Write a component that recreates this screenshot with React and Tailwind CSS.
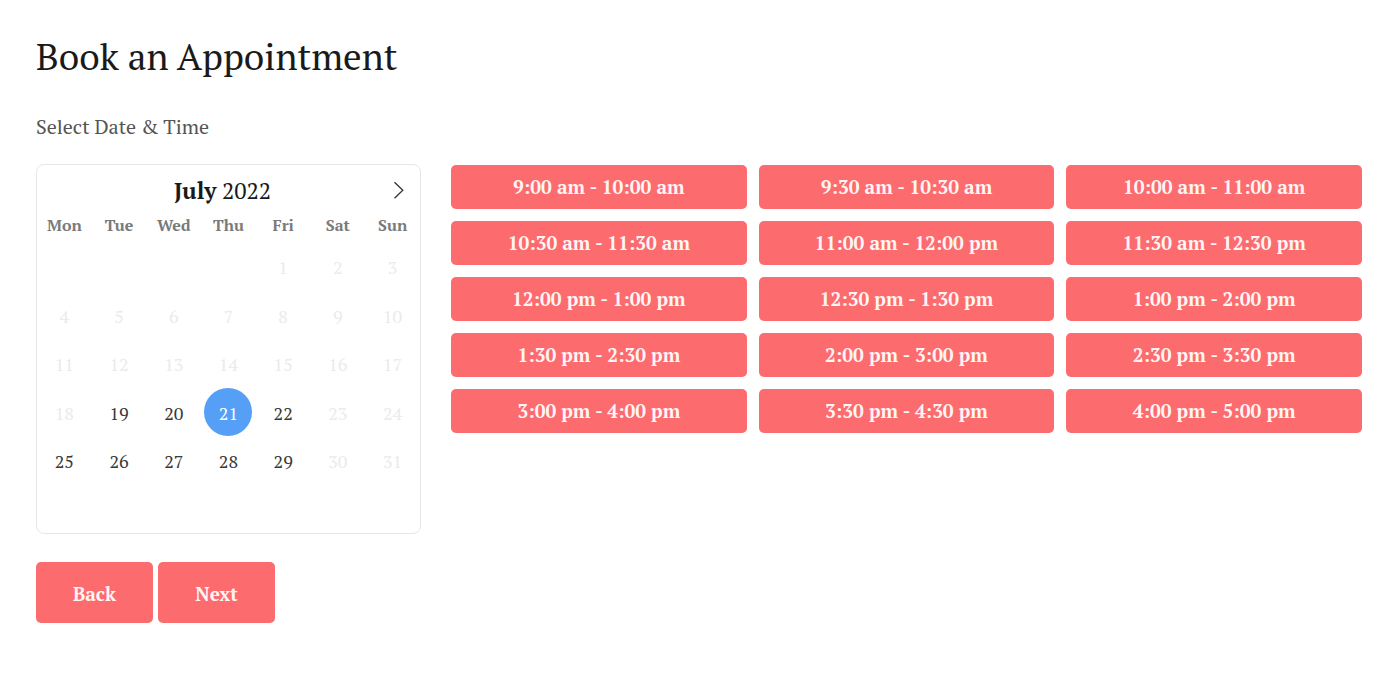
const weekdays = ["Mon", "Tue", "Wed", "Thu", "Fri", "Sat", "Sun"];

const weeks = [
  [null, null, null, null, 1, 2, 3],
  [4, 5, 6, 7, 8, 9, 10],
  [11, 12, 13, 14, 15, 16, 17],
  [18, 19, 20, 21, 22, 23, 24],
  [25, 26, 27, 28, 29, 30, 31],
  [null, null, null, null, null, null, null],
];

const selectedDay = 21;
const availableDays = [19, 20, 21, 22, 25, 26, 27, 28, 29];

const slots = [
  "9:00 am - 10:00 am",
  "9:30 am - 10:30 am",
  "10:00 am - 11:00 am",
  "10:30 am - 11:30 am",
  "11:00 am - 12:00 pm",
  "11:30 am - 12:30 pm",
  "12:00 pm - 1:00 pm",
  "12:30 pm - 1:30 pm",
  "1:00 pm - 2:00 pm",
  "1:30 pm - 2:30 pm",
  "2:00 pm - 3:00 pm",
  "2:30 pm - 3:30 pm",
  "3:00 pm - 4:00 pm",
  "3:30 pm - 4:30 pm",
  "4:00 pm - 5:00 pm",
];

function dayClass(day) {
  if (day === selectedDay) return "bg-[#569ff7] text-white";
  if (availableDays.includes(day)) return "text-[#393939]";
  return "text-[#ebebeb]";
}

function Day({ day }) {
  return (
    <button
      type="button"
      disabled={!availableDays.includes(day)}
      aria-pressed={day === selectedDay}
      className={`mx-auto block size-12 rounded-full pt-0.5 text-[18px] leading-6 ${dayClass(day)}`}
    >
      {day}
    </button>
  );
}

function Calendar() {
  return (
    <section
      aria-label="Calendar"
      className="w-[385px] shrink-0 rounded-lg border border-[#e6e6e6]"
    >
      <div className="grid grid-cols-[44px_1fr_44px] items-center pt-1">
        <h2 className="col-start-2 pr-3 text-center text-[23px] leading-[44px] text-[#1a1a1a]">
          <span className="font-bold">July</span> 2022
        </h2>
        <button
          type="button"
          aria-label="Next month"
          className="flex h-11 items-center justify-center text-[#333]"
        >
          <svg
            className="size-5"
            viewBox="0 0 20 20"
            fill="none"
            stroke="currentColor"
            strokeWidth="1.3"
          >
            <path d="M6.5 1.2 L14.8 9.2 L6.5 17.2" />
          </svg>
        </button>
      </div>
      <table className="h-[320px] w-full table-fixed border-collapse">
        <thead>
          <tr className="h-[29px]">
            {weekdays.map((name) => (
              <th
                key={name}
                scope="col"
                className="p-0 align-top text-[16px] leading-6 font-bold text-[#7a7a7a]"
              >
                {name}
              </th>
            ))}
          </tr>
        </thead>
        <tbody>
          {weeks.map((week, row) => (
            <tr key={row}>
              {week.map((day, col) => (
                <td key={col} className="h-12 p-0">
                  {day && <Day day={day} />}
                </td>
              ))}
            </tr>
          ))}
        </tbody>
      </table>
    </section>
  );
}

export default function App() {
  return (
    <main className="px-9 pt-[33px] pb-12 font-['PT_Serif','Liberation_Serif',serif]">
      <h1 className="text-[37px] leading-[48px] text-[#1a1a1a]">
        Book an Appointment
      </h1>
      <p className="mt-[30px] text-[20px] leading-8 text-[#555]">
        Select Date &amp; Time
      </p>
      <div className="mt-[21px] flex items-start gap-[30px]">
        <Calendar />
        <div className="mt-px mr-0.5 grid flex-1 grid-cols-3 gap-3">
          {slots.map((slot) => (
            <button
              key={slot}
              type="button"
              className="h-11 rounded-[5px] bg-[#fc6b6e] text-[19px] leading-6 font-bold text-[#fff5f5]"
            >
              {slot}
            </button>
          ))}
        </div>
      </div>
      <div className="mt-7 flex gap-[5px]">
        <button
          type="button"
          className="h-[61px] w-[117px] rounded-[5px] bg-[#fc6b6e] pt-0.5 text-[19px] leading-6 font-bold text-[#fff5f5]"
        >
          Back
        </button>
        <button
          type="button"
          className="h-[61px] w-[117px] rounded-[5px] bg-[#fc6b6e] pt-0.5 text-[19px] leading-6 font-bold text-[#fff5f5]"
        >
          Next
        </button>
      </div>
    </main>
  );
}
